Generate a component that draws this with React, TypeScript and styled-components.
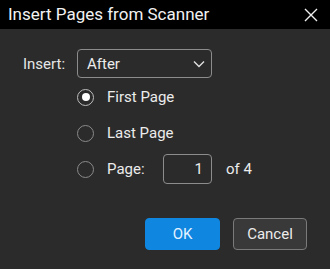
import React from "react";
import styled, { createGlobalStyle } from "styled-components";

const Global = createGlobalStyle`
  html, body { margin: 0; padding: 0; background: #2b2b2b; }
  body { font-family: Roboto, "Noto Sans", sans-serif; }
`;

const Dialog = styled.div`
  width: 330px;
  height: 269px;
  background: #2b2b2b;
  display: flex;
  flex-direction: column;
  color: #ececec;
`;

const TitleBar = styled.div`
  height: 29px;
  background: #000;
  display: flex;
  align-items: center;
  justify-content: space-between;
  padding: 0 12px 0 8px;
  box-sizing: border-box;
`;

const Title = styled.div`
  font-size: 17px;
  color: #f2f2f2;
  line-height: 29px;
  margin-top: -1px;
`;

const CloseButton = styled.div`
  width: 14px;
  height: 14px;
  display: flex;
  margin-top: 1px;
`;

const Body = styled.div`
  padding: 20px 23px 0 23px;
  display: flex;
  flex-direction: column;
`;

const Grid = styled.div`
  display: grid;
  grid-template-columns: 54px 1fr;
  align-items: center;
  row-gap: 0;
`;

const Label = styled.div`
  font-size: 15px;
  color: #e6e6e6;
`;

const Select = styled.div`
  width: 135px;
  height: 29px;
  box-sizing: border-box;
  border: 1px solid #8c8c8c;
  border-radius: 4px;
  display: flex;
  align-items: center;
  justify-content: space-between;
  padding: 0 6px 0 9px;
  font-size: 15px;
  color: #ececec;
`;

const Options = styled.div`
  grid-column: 2;
  display: flex;
  flex-direction: column;
  gap: 6px;
  margin-top: 4px;
`;

const OptionRow = styled.div`
  height: 30px;
  display: flex;
  align-items: center;
  font-size: 15px;
  color: #ececec;
`;

const Radio = styled.div<{ $checked?: boolean }>`
  width: 17px;
  height: 17px;
  box-sizing: border-box;
  border-radius: 50%;
  border: 1.5px solid ${(p) => (p.$checked ? "#bdbdbd" : "#8a8a8a")};
  display: flex;
  align-items: center;
  justify-content: center;
  margin-right: 13px;
  margin-left: 0;
  &::after {
    content: "";
    display: ${(p) => (p.$checked ? "block" : "none")};
    width: 8px;
    height: 8px;
    border-radius: 50%;
    background: #fff;
  }
`;

const PageLabel = styled.span`
  width: 56px;
`;

const NumberBox = styled.div`
  width: 49px;
  height: 30px;
  box-sizing: border-box;
  border: 1px solid #8c8c8c;
  border-radius: 4px;
  display: flex;
  align-items: center;
  justify-content: flex-end;
  padding-right: 8px;
  font-size: 15px;
  margin-right: 14px;
`;

const Buttons = styled.div`
  display: flex;
  justify-content: flex-end;
  gap: 13px;
  margin-top: 34px;
`;

const Button = styled.div<{ $primary?: boolean }>`
  width: ${(p) => (p.$primary ? "75px" : "74px")};
  height: 32px;
  box-sizing: border-box;
  border-radius: 4px;
  display: flex;
  align-items: center;
  justify-content: center;
  font-size: 15px;
  background: ${(p) => (p.$primary ? "#0f86df" : "#393939")};
  border: 1px solid ${(p) => (p.$primary ? "#0f86df" : "#7a7a7a")};
  color: ${(p) => (p.$primary ? "#e4f2ff" : "#ececec")};
`;

export default function App() {
  return (
    <>
      <Global />
      <Dialog>
        <TitleBar>
          <Title>Insert Pages from Scanner</Title>
          <CloseButton>
            <svg width="14" height="14" viewBox="0 0 14 14">
              <path d="M1 1L13 13M13 1L1 13" stroke="#f0f0f0" strokeWidth="1.4" />
            </svg>
          </CloseButton>
        </TitleBar>
        <Body>
          <Grid>
            <Label>Insert:</Label>
            <Select>
              <span>After</span>
              <svg width="12" height="8" viewBox="0 0 12 8">
                <path d="M1 1.5L6 6.5L11 1.5" stroke="#e0e0e0" strokeWidth="1.4" fill="none" />
              </svg>
            </Select>
            <Options>
              <OptionRow>
                <Radio $checked />
                First Page
              </OptionRow>
              <OptionRow>
                <Radio />
                Last Page
              </OptionRow>
              <OptionRow>
                <Radio />
                <PageLabel>Page:</PageLabel>
                <NumberBox>1</NumberBox>
                of 4
              </OptionRow>
            </Options>
          </Grid>
          <Buttons>
            <Button $primary>OK</Button>
            <Button>Cancel</Button>
          </Buttons>
        </Body>
      </Dialog>
    </>
  );
}
